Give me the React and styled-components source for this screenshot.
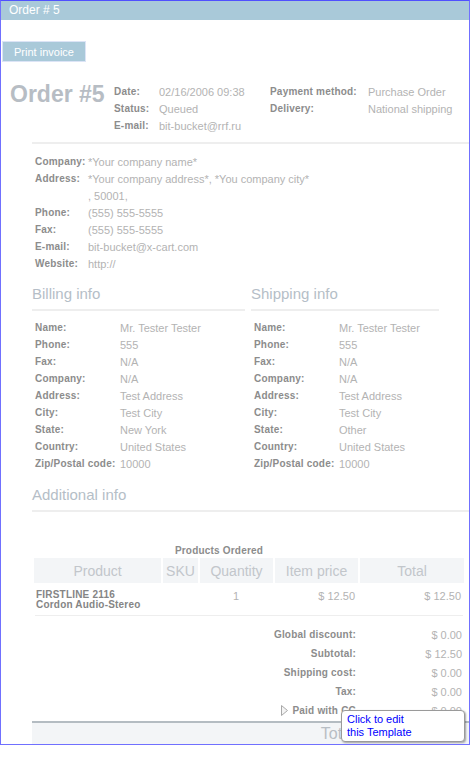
import styled, { createGlobalStyle } from "styled-components";

const GlobalStyle = createGlobalStyle`
  body {
    margin: 0;
    background: #fff;
    font-family: "Liberation Sans", Arial, sans-serif;
  }
`;

const Frame = styled.div`
  position: relative;
  width: 470px;
  height: 745px;
  box-sizing: border-box;
  border: 1px solid #7070ff;
  border-top-color: #5050ff;
  overflow: hidden;
`;

const TitleBar = styled.div`
  height: 19px;
  line-height: 19px;
  padding-left: 8px;
  background: #a9c9d9;
  color: #fff;
  font-size: 12px;
`;

const Button = styled.button`
  display: block;
  margin: 21px 0 0 1px;
  width: 84px;
  height: 21px;
  padding: 0;
  border: 1px solid #dce4f6;
  background: #a9c9d9;
  background-clip: padding-box;
  color: #fff;
  font-family: inherit;
  font-size: 11px;
  cursor: pointer;
`;

const Header = styled.div`
  display: flex;
  align-items: flex-start;
  margin-top: 21px;
  padding-left: 9px;
`;

const OrderNo = styled.div`
  width: 104px;
  font-size: 23px;
  line-height: 23px;
  font-weight: bold;
  color: #b7bdc4;
`;

const InfoGrid = styled.div`
  display: grid;
  grid-template-columns: ${(p) => p.$cols};
  grid-auto-rows: ${(p) => p.$row || 17}px;
  align-items: center;
  font-size: 11px;
  padding-left: ${(p) => p.$indent || 0}px;
`;

const Label = styled.span`
  font-size: 10px;
  font-weight: bold;
  letter-spacing: 0.2px;
  color: #8c8c8c;
  white-space: nowrap;
`;

const Value = styled.span`
  color: #b3b3b3;
  white-space: nowrap;
`;

const Divider = styled.div`
  margin: ${(p) => p.$mt || 0}px 0 0 31px;
  height: 2px;
  background: #eeeeee;
`;

const Columns = styled.div`
  display: flex;
  gap: 6px;
  margin: 13px 0 0 31px;
`;

const Section = styled.div`
  width: ${(p) => p.$width}px;
`;

const Heading = styled.div`
  height: 18px;
  line-height: 18px;
  padding-bottom: 6px;
  border-bottom: 2px solid #eeeeee;
  font-size: 15px;
  color: #b5bec7;
  margin: ${(p) => p.$mt || 0}px 0 0 ${(p) => p.$ml || 0}px;
`;

const SectionBody = styled.div`
  margin-top: ${(p) => p.$mt || 8}px;
`;

const Caption = styled.div`
  margin: 34px 0 0 31px;
  width: 374px;
  text-align: center;
  font-size: 10px;
  font-weight: bold;
  letter-spacing: 0.2px;
  line-height: 10px;
  color: #8c8c8c;
`;

const Table = styled.table`
  margin-left: 31px;
  width: 434px;
  border-collapse: separate;
  border-spacing: 2px;
  table-layout: fixed;
`;

const Th = styled.th`
  height: 25px;
  padding: 0;
  background: #f3f5f7;
  color: #c2c6cb;
  font-size: 14px;
  font-weight: normal;
`;

const Td = styled.td`
  padding: 5px 3px 3px 2px;
  font-size: 11px;
  color: #b3b3b3;
  text-align: ${(p) => p.$align || "left"};
  vertical-align: top;
`;

const ProductName = styled.div`
  font-size: 10px;
  line-height: 10px;
  font-weight: bold;
  letter-spacing: 0.2px;
  color: #858585;
`;

const RowLine = styled.div`
  margin: 0 0 0 34px;
  width: 428px;
  height: 1px;
  background: #eeeeee;
`;

const Totals = styled.div`
  display: grid;
  grid-template-columns: 1fr 104px;
  column-gap: 2px;
  grid-auto-rows: 19px;
  align-items: center;
  margin: 9px 0 0 33px;
  width: 431px;
`;

const TotalLabel = styled(Label)`
  text-align: right;
  padding-right: 3px;
  display: flex;
  justify-content: flex-end;
  align-items: center;
  gap: 4px;
`;

const TotalValue = styled(Value)`
  text-align: right;
  padding-right: 3px;
  font-size: 11px;
`;

const TotalBar = styled.div`
  margin: 1px 0 0 31px;
  height: 22px;
  border-top: 2px solid #b4bcc2;
  background: #f3f5f7;
  display: grid;
  grid-template-columns: 1fr 110px;
  align-items: center;
`;

const GrandLabel = styled.span`
  text-align: right;
  font-size: 16px;
  color: #b8bec4;
`;

const Tooltip = styled.div`
  position: absolute;
  left: 340px;
  top: 709px;
  width: 124px;
  height: 32px;
  box-sizing: border-box;
  padding: 2px 5px;
  background: #fff;
  border: 1px solid #9a9a9a;
  border-radius: 4px;
  box-shadow: 1px 1px 2px rgba(0, 0, 0, 0.35);
  color: #0000ff;
  font-size: 11px;
  line-height: 13px;
`;

const header = [
  ["Date:", "02/16/2006 09:38", "Payment method:", "Purchase Order"],
  ["Status:", "Queued", "Delivery:", "National shipping"],
  ["E-mail:", "bit-bucket@rrf.ru", "", ""],
];

const company = [
  ["Company:", "*Your company name*"],
  ["Address:", "*Your company address*, *You company city*"],
  ["", ", 50001,"],
  ["Phone:", "(555) 555-5555"],
  ["Fax:", "(555) 555-5555"],
  ["E-mail:", "bit-bucket@x-cart.com"],
  ["Website:", "http://"],
];

const billing = [
  ["Name:", "Mr. Tester Tester"],
  ["Phone:", "555"],
  ["Fax:", "N/A"],
  ["Company:", "N/A"],
  ["Address:", "Test Address"],
  ["City:", "Test City"],
  ["State:", "New York"],
  ["Country:", "United States"],
  ["Zip/Postal code:", "10000"],
];

const shipping = billing.map(([l, v]) => [l, l === "State:" ? "Other" : v]);

const totals = [
  ["Global discount:", "$ 0.00"],
  ["Subtotal:", "$ 12.50"],
  ["Shipping cost:", "$ 0.00"],
  ["Tax:", "$ 0.00"],
  ["Paid with CC", "$ 0.00", true],
];

const Arrow = () => (
  <svg width="7" height="11" viewBox="0 0 7 11">
    <path d="M0.5 0.5 L6.5 5.5 L0.5 10.5 Z" fill="#f4f4f4" stroke="#a8a8a8" />
  </svg>
);

const Pairs = ({ rows, cols, indent }) => (
  <InfoGrid $cols={cols} $indent={indent}>
    {rows.map(([l, v], i) => [
      <Label key={"l" + i}>{l}</Label>,
      <Value key={"v" + i}>{v}</Value>,
    ])}
  </InfoGrid>
);

export default function App() {
  return (
    <>
      <GlobalStyle />
      <Frame>
        <TitleBar>Order # 5</TitleBar>
        <Button>Print invoice</Button>

        <Header>
          <OrderNo>Order #5</OrderNo>
          <InfoGrid $cols="45px 111px 98px 1fr">
            {header.map((r, i) =>
              r.map((c, j) =>
                j % 2 === 0 ? (
                  <Label key={i + "-" + j}>{c}</Label>
                ) : (
                  <Value key={i + "-" + j}>{c}</Value>
                )
              )
            )}
          </InfoGrid>
        </Header>

        <Divider $mt={8} />

        <SectionBody $mt={9}>
          <Pairs rows={company} cols="53px 1fr" indent={34} />
        </SectionBody>

        <Columns>
          <Section $width={213}>
            <Heading>Billing info</Heading>
            <SectionBody>
              <Pairs rows={billing} cols="85px 1fr" indent={3} />
            </SectionBody>
          </Section>
          <Section $width={188}>
            <Heading>Shipping info</Heading>
            <SectionBody>
              <Pairs rows={shipping} cols="85px 1fr" indent={3} />
            </SectionBody>
          </Section>
        </Columns>

        <Heading $mt={14} $ml={31}>Additional info</Heading>

        <Caption>Products Ordered</Caption>
        <Table>
          <colgroup>
            <col style={{ width: 127 }} />
            <col style={{ width: 35 }} />
            <col style={{ width: 73 }} />
            <col style={{ width: 83 }} />
            <col style={{ width: 104 }} />
          </colgroup>
          <thead>
            <tr>
              <Th>Product</Th>
              <Th>SKU</Th>
              <Th>Quantity</Th>
              <Th>Item price</Th>
              <Th>Total</Th>
            </tr>
          </thead>
          <tbody>
            <tr>
              <Td>
                <ProductName>FIRSTLINE 2116</ProductName>
                <ProductName>Cordon Audio-Stereo</ProductName>
              </Td>
              <Td />
              <Td $align="center">1</Td>
              <Td $align="right">$ 12.50</Td>
              <Td $align="right">$ 12.50</Td>
            </tr>
          </tbody>
        </Table>
        <RowLine />

        <Totals>
          {totals.map(([l, v, arrow]) => [
            <TotalLabel key={l}>
              {arrow && <Arrow />}
              {l}
            </TotalLabel>,
            <TotalValue key={l + "v"}>{v}</TotalValue>,
          ])}
        </Totals>
        <TotalBar>
          <GrandLabel>Total:</GrandLabel>
          <span />
        </TotalBar>

        <Tooltip>
          Click to edit
          <br />
          this Template
        </Tooltip>
      </Frame>
    </>
  );
}
